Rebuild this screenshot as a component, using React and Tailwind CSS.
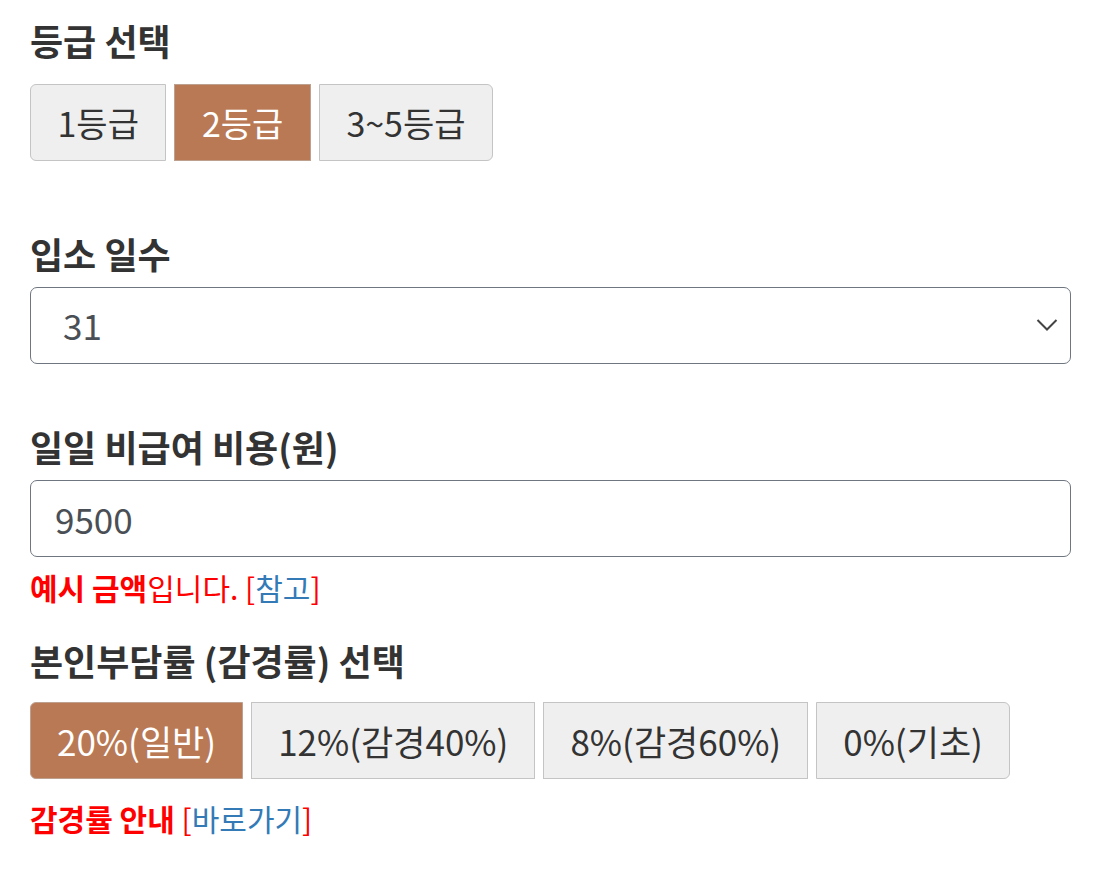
import { useState } from "react";

const FONT = { fontFamily: '"Noto Sans CJK KR", "Noto Sans", sans-serif' };

const GRADES = ["1등급", "2등급", "3~5등급"];
const RATES = ["20%(일반)", "12%(감경40%)", "8%(감경60%)", "0%(기초)"];

function ButtonGroup({ items, value, onChange, size }) {
  return (
    <div className="flex gap-2">
      {items.map((label, i) => {
        const active = value === i;
        const first = i === 0;
        const last = i === items.length - 1;
        return (
          <button
            key={label}
            onClick={() => onChange(i)}
            className={
              "h-[77px] flex items-center border leading-none " +
              size +
              (active ? " bg-[#b97954] border-[#bda08e] text-white " : " bg-[#efefef] border-[#c4c4c4] text-[#333] ") +
              (first ? "rounded-l-[6px] " : "") +
              (last ? "rounded-r-[6px]" : "")
            }
          >
            {label}
          </button>
        );
      })}
    </div>
  );
}

export default function App() {
  const [grade, setGrade] = useState(1);
  const [rate, setRate] = useState(0);
  const [days, setDays] = useState("31");
  const [cost, setCost] = useState("9500");

  return (
    <div className="bg-white min-h-[871px] pl-[30px] pt-[16px] w-[1071px] text-[#333]" style={FONT}>
      <h2 className="text-[36px] font-bold leading-[48px] mb-[20px]">등급 선택</h2>
      <ButtonGroup items={GRADES} value={grade} onChange={setGrade} size="text-[34px] px-[26.5px]" />

      <h2 className="text-[36px] font-bold leading-[48px] mt-[68px] mb-[10px]">입소 일수</h2>
      <div className="relative">
        <select
          value={days}
          onChange={(e) => setDays(e.target.value)}
          className="appearance-none w-full h-[77px] border border-[#6f7680] rounded-[7px] bg-white pl-[32px] text-[35px] text-[#4a4f55] outline-none"
        >
          {Array.from({ length: 31 }, (_, i) => String(i + 1)).map((d) => (
            <option key={d} value={d}>{d}</option>
          ))}
        </select>
        <svg className="absolute right-[13px] top-[31px] pointer-events-none" width="22" height="14" viewBox="0 0 22 14" fill="none">
          <path d="M1.5 2 L11 11.5 L20.5 2" stroke="#444" strokeWidth="2" />
        </svg>
      </div>

      <h2 className="text-[36px] font-bold leading-[48px] mt-[58px] mb-[10px]">일일 비급여 비용(원)</h2>
      <input
        value={cost}
        onChange={(e) => setCost(e.target.value)}
        className="w-full h-[77px] border border-[#6f7680] rounded-[7px] bg-white px-[24px] text-[35px] text-[#4a4f55] outline-none"
      />
      <p className="text-[30px] leading-[42px] mt-[9px] text-[#ff0000]">
        <b>예시 금액</b>입니다. [<a href="#" className="text-[#337ab7]">참고</a>]
      </p>

      <h2 className="text-[36px] font-bold leading-[48px] mt-[28px] mb-[18px]">본인부담률 (감경률) 선택</h2>
      <ButtonGroup items={RATES} value={rate} onChange={setRate} size="text-[35px] px-[26px]" />
      <p className="text-[30px] leading-[42px] mt-[18px] text-[#ff0000]">
        <b>감경률 안내</b> [<a href="#" className="text-[#337ab7]">바로가기</a>]
      </p>
    </div>
  );
}
